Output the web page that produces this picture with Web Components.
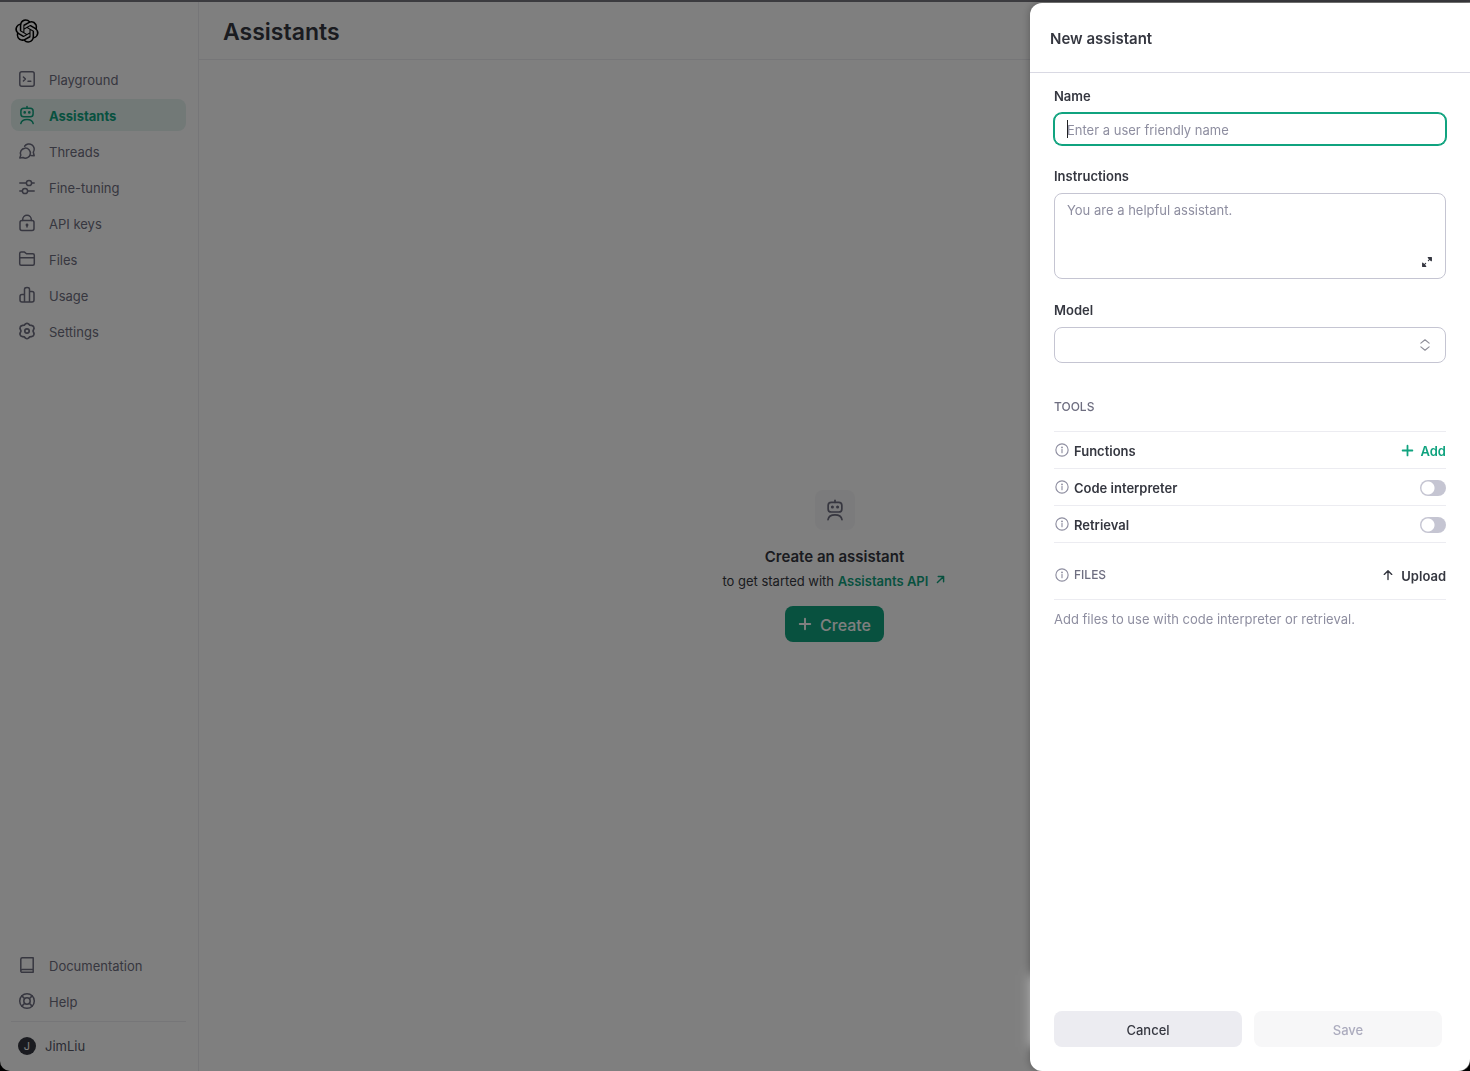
<!DOCTYPE html>
<html lang="en">
<head>
<meta charset="utf-8">
<title>Assistants</title>
<style>
  html, body { height: 100%; }
  body {
    margin: 0;
    background: #000;
    font: 13px/20px Inter, "Liberation Sans", sans-serif;
    color: #353740;
    --green: #10a37f;
    --muted: #6e6e80;
    --placeholder: #8e8ea0;
    --line: #ececf1;
    --border: #c5c5d2;
  }
</style>
</head>
<body>
<app-shell>
  <side-nav slot="nav">
    <nav-item icon="playground">Playground</nav-item>
    <nav-item icon="assistant" active>Assistants</nav-item>
    <nav-item icon="threads">Threads</nav-item>
    <nav-item icon="tuning">Fine-tuning</nav-item>
    <nav-item icon="lock">API keys</nav-item>
    <nav-item icon="folder">Files</nav-item>
    <nav-item icon="usage">Usage</nav-item>
    <nav-item icon="settings">Settings</nav-item>
    <nav-item slot="bottom" icon="book">Documentation</nav-item>
    <nav-item slot="bottom" icon="help">Help</nav-item>
    <user-badge slot="user" initial="J">JimLiu</user-badge>
  </side-nav>
  <page-header slot="header">Assistants</page-header>
  <empty-state></empty-state>
</app-shell>

<side-drawer heading="New assistant">
  <text-field label="Name" placeholder="Enter a user friendly name"></text-field>
  <text-area-field label="Instructions" placeholder="You are a helpful assistant."></text-area-field>
  <select-field label="Model"></select-field>
  <tool-list>
    <tool-row label="Functions" action="Add"></tool-row>
    <tool-row label="Code interpreter"></tool-row>
    <tool-row label="Retrieval"></tool-row>
  </tool-list>
  <file-section>Add files to use with code interpreter or retrieval.</file-section>
</side-drawer>

<script>
const ICONS = {
  logo: `<svg viewBox="0 0 41 41" fill="currentColor"><path d="M37.532 16.87a9.963 9.963 0 0 0-.856-8.184 10.078 10.078 0 0 0-10.855-4.835A9.964 9.964 0 0 0 18.306.5a10.079 10.079 0 0 0-9.614 6.977 9.967 9.967 0 0 0-6.664 4.834 10.08 10.08 0 0 0 1.24 11.817 9.965 9.965 0 0 0 .856 8.185 10.079 10.079 0 0 0 10.855 4.835 9.965 9.965 0 0 0 7.516 3.35 10.078 10.078 0 0 0 9.617-6.981 9.967 9.967 0 0 0 6.663-4.834 10.079 10.079 0 0 0-1.243-11.813ZM22.498 37.886a7.474 7.474 0 0 1-4.799-1.735c.061-.033.168-.091.237-.134l7.964-4.6a1.294 1.294 0 0 0 .655-1.134V19.054l3.366 1.944a.12.12 0 0 1 .066.092v9.299a7.505 7.505 0 0 1-7.49 7.496ZM6.392 31.006a7.471 7.471 0 0 1-.894-5.023c.06.036.162.099.237.141l7.964 4.6a1.297 1.297 0 0 0 1.308 0l9.724-5.614v3.888a.12.12 0 0 1-.048.103l-8.051 4.649a7.504 7.504 0 0 1-10.24-2.744ZM4.297 13.62A7.469 7.469 0 0 1 8.2 10.333c0 .068-.004.19-.004.274v9.201a1.294 1.294 0 0 0 .654 1.132l9.723 5.614-3.366 1.944a.12.12 0 0 1-.114.01L7.04 23.856a7.504 7.504 0 0 1-2.743-10.237Zm27.658 6.437-9.724-5.615 3.367-1.943a.121.121 0 0 1 .113-.01l8.052 4.648a7.498 7.498 0 0 1-1.158 13.528v-9.476a1.293 1.293 0 0 0-.65-1.132Zm3.35-5.043c-.059-.037-.162-.099-.236-.141l-7.965-4.6a1.298 1.298 0 0 0-1.308 0l-9.723 5.614v-3.888a.12.12 0 0 1 .048-.103l8.05-4.645a7.497 7.497 0 0 1 11.135 7.763Zm-21.063 6.929-3.367-1.944a.12.12 0 0 1-.065-.092v-9.299a7.497 7.497 0 0 1 12.293-5.756 6.94 6.94 0 0 0-.236.134l-7.965 4.6a1.294 1.294 0 0 0-.654 1.132l-.006 11.225Zm1.829-3.943 4.33-2.501 4.332 2.5v5l-4.331 2.5-4.331-2.5V18Z"/></svg>`,
  playground: line(`<rect x=".8" y=".8" width="14.4" height="14.4" rx="2"/><path d="M4.4 6 6.400 8l-2 2M9 10.200h2.800"/>`),
  assistant: line(`<path d="M8-.6v1.800"/><rect x="1.900" y="1.200" width="12.200" height="8.600" rx="2.800"/><path d="M1.800 16.600c.5-2.800 2.900-4.200 6.200-4.200s5.700 1.400 6.200 4.200"/><circle cx="5.700" cy="5.400" r=".6" fill="currentColor"/><circle cx="10.300" cy="5.400" r=".6" fill="currentColor"/>`),
  threads: line(`<path d="M.8 14.900l1-2.800A5 5 0 1 1 4 14.500Z"/><path d="M5.600 3.200a5.200 5.200 0 1 1 8.700 6l.9 3.500-3.500-.2"/>`),
  tuning: line(`<path d="M.8 4h6.400M12.800 4h2.400M.8 12h2.400M8.800 12h6.400"/><circle cx="10" cy="4" r="2.600"/><circle cx="6" cy="12" r="2.600"/>`),
  lock: line(`<rect x="1" y="5.600" width="14" height="10" rx="2"/><path d="M3.700 5.400V4.600a4.300 4.300 0 0 1 8.600 0v.8M8 10.400v1.500"/><circle cx="8" cy="9.900" r=".7" fill="currentColor"/>`),
  folder: line(`<path d="M.7 12.700V2.600c0-.9.600-1.500 1.500-1.500h3.300l2 1.700h6.300c.9 0 1.500.6 1.500 1.500v8.400c0 .9-.6 1.500-1.500 1.500H2.200c-.9 0-1.500-.6-1.500-1.500ZM.7 6.800h14.600"/>`),
  usage: line(`<path d="M5.500 15V2.300C5.500 1.200 6.300.6 8 .6s2.500.6 2.500 1.700V15M5.500 7.600H3c-1.300 0-2 .7-2 2V13c0 1.300.7 2 2 2h10c1.300 0 2-.7 2-2V6.600c0-1.300-.7-2-2-2h-2.500"/>`),
  settings: line(`<path d="M6.500.9q1.500-1.100 3 0l1.200 1.200 1.700.2q1.900.2 2.500 1.900.4 1-.2 2L14 8l.7 1.800q.6 1 .2 2-.6 1.700-2.500 1.900l-1.700.2-1.200 1.200q-1.500 1.100-3 0l-1.200-1.200-1.700-.2q-1.900-.2-2.500-1.900-.4-1 .2-2L2 8l-.7-1.800q-.6-1-.2-2 .6-1.700 2.500-1.900l1.700-.2Z"/><circle cx="8" cy="8" r="2.200"/>`, 1.7),
  book: line(`<path d="M1.800 14.200V2.300C1.800 1.400 2.400.8 3.300.8h10.900v14.500H3.200c-.8 0-1.400-.5-1.400-1.300 0-.9.600-1.500 1.500-1.500h10.900"/>`),
  help: line(`<circle cx="8" cy="8" r="7.300"/><circle cx="8" cy="8" r="3.200"/><path d="m2.900 2.900 2.800 2.800M13.100 2.900l-2.800 2.800M2.900 13.100l2.800-2.800M13.100 13.100l-2.800-2.800"/>`),
  plus: line(`<path d="M8 2v12M2 8h12"/>`, 2.2),
  up: line(`<path d="M8 14V2.500M3 7.200l5-5 5 5"/>`, 1.8),
  external: line(`<path d="M2.500 13.500l11-11M4 2.500h9.500V12"/>`, 2.6),
  info: line(`<circle cx="8" cy="8" r="7"/><path d="M8 7.400v3.800"/><circle cx="8" cy="5" r=".4" fill="currentColor"/>`, 1.3),
  expand: line(`<path d="M9.800 6.200 13.500 2.500M6.200 9.800 2.500 13.500"/><path d="M9.600 2.200h4.200v4.200ZM2.200 9.600v4.200h4.200Z" fill="currentColor"/>`, 1.5),
  chevrons: line(`<path d="m2.500 5.500 5.500-4.500 5.500 4.500M2.500 10.500l5.500 4.500 5.500-4.500"/>`, 1.6),
};

function line(shapes, width = 1.5) {
  return `<svg viewBox="0 0 16 16" fill="none" stroke="currentColor" stroke-width="${width}" stroke-linecap="round" stroke-linejoin="round">${shapes}</svg>`;
}

// Every element opens its shadow root the same way and renders once.
class BaseElement extends HTMLElement {
  constructor() {
    super();
    this.attachShadow({ mode: "open" });
  }

  connectedCallback() {
    this.shadowRoot.innerHTML = `
      <style>
        *, ::before, ::after { box-sizing: border-box; }
        button, input, textarea, select { font: inherit; color: inherit; margin: 0; }
        button { border: 0; padding: 0; background: none; cursor: pointer; }
        a { color: inherit; text-decoration: none; }
      </style>
      ${this.render()}`;
  }

  attr(name) {
    return this.getAttribute(name) || "";
  }
}

class SvgIcon extends BaseElement {
  render() {
    return `
      <style>
        :host { display: block; flex: none; width: var(--size, 16px); height: var(--size, 16px); }
        svg { display: block; width: 100%; height: 100%; overflow: visible; }
      </style>
      ${ICONS[this.attr("name")]}`;
  }
}

class AppShell extends BaseElement {
  render() {
    return `
      <style>
        :host {
          display: block;
          box-sizing: border-box;
          height: 100vh;
          padding-top: 2px;
          background: linear-gradient(#77767e 2px, #000 2px);
        }
        .window {
          display: grid;
          grid-template-columns: auto 1fr;
          height: 100%;
          background: #fff;
          border-radius: 0 0 10px 10px;
          overflow: hidden;
        }
        main { display: flex; flex-direction: column; }
        .content { flex: 1; display: grid; place-items: center; }
      </style>
      <div class="window">
        <slot name="nav"></slot>
        <main>
          <slot name="header"></slot>
          <div class="content"><slot></slot></div>
        </main>
      </div>`;
  }
}

class SideNav extends BaseElement {
  render() {
    return `
      <style>
        :host {
          display: flex;
          flex-direction: column;
          box-sizing: border-box;
          width: 199px;
          padding: 17px 12px 9px 11px;
          border-right: 1px solid var(--line);
        }
        .logo { --size: 24px; color: #000; margin: 0 0 20px 4px; align-self: flex-start; }
        nav { display: flex; flex-direction: column; gap: 4px; }
        .bottom { margin-top: auto; }
        .user { margin-top: 4px; border-top: 1px solid var(--line); padding-top: 8px; }
      </style>
      <a class="logo" href="#" aria-label="Home"><svg-icon name="logo"></svg-icon></a>
      <nav><slot></slot></nav>
      <nav class="bottom"><slot name="bottom"></slot></nav>
      <div class="user"><slot name="user"></slot></div>`;
  }
}

class NavItem extends BaseElement {
  render() {
    return `
      <style>
        :host { display: block; color: var(--muted); }
        a {
          display: flex;
          align-items: center;
          gap: 14px;
          height: 32px;
          padding: 0 8px;
          border-radius: 8px;
        }
        slot { display: block; margin-top: 2px; }
        :host([active]) { color: var(--green); font-weight: 700; }
        :host([active]) a { background: #e4f2ef; }
      </style>
      <a href="#"><svg-icon name="${this.attr("icon")}"></svg-icon><slot></slot></a>`;
  }
}

class UserBadge extends BaseElement {
  render() {
    return `
      <style>
        :host { display: block; color: #565869; }
        button { display: flex; align-items: center; gap: 9px; height: 32px; padding: 0 7px; }
        .avatar {
          width: 18px;
          height: 18px;
          border-radius: 50%;
          background: #353740;
          color: #fff;
          font-size: 11px;
          line-height: 18px;
        }
      </style>
      <button type="button"><span class="avatar">${this.attr("initial")}</span><slot></slot></button>`;
  }
}

class PageHeader extends BaseElement {
  render() {
    return `
      <style>
        :host { display: block; border-bottom: 1px solid var(--line); }
        h1 { margin: 0; padding: 16px 24px 13px; font-size: 23px; line-height: 28px; font-weight: 600; }
      </style>
      <h1><slot></slot></h1>`;
  }
}

class EmptyState extends BaseElement {
  render() {
    return `
      <style>
        :host { display: flex; flex-direction: column; align-items: center; }
        .tile {
          display: grid;
          place-items: center;
          width: 40px;
          height: 40px;
          border-radius: 8px;
          background: #f7f7f8;
          color: var(--muted);
          --size: 18px;
          margin-bottom: 15px;
        }
        h2 { margin: 0; font-size: 15px; line-height: 24px; font-weight: 600; }
        p { margin: 2px 0 15px; }
        p a { color: var(--green); font-weight: 600; }
        p svg-icon { display: inline-block; --size: 9px; margin: 0 2px 2px 4px; }
        button {
          display: flex;
          align-items: center;
          gap: 8px;
          height: 36px;
          padding: 0 13px;
          border-radius: 8px;
          background: var(--green);
          color: #fff;
          font-size: 16px;
          font-weight: 500;
          --size: 14px;
        }
        button span { padding-top: 2px; }
      </style>
      <div class="tile"><svg-icon name="assistant"></svg-icon></div>
      <h2>Create an assistant</h2>
      <p>to get started with <a href="#">Assistants API <svg-icon name="external"></svg-icon></a></p>
      <button type="button"><svg-icon name="plus"></svg-icon><span>Create</span></button>`;
  }
}

class SideDrawer extends BaseElement {
  render() {
    return `
      <style>
        :host { position: fixed; inset: 0; display: flex; justify-content: flex-end; background: rgba(0, 0, 0, .5); }
        section {
          display: flex;
          flex-direction: column;
          width: 440px;
          margin-top: 3px;
          background: #fff;
          border-radius: 12px 0 12px 12px;
          box-shadow: 0 0 8px rgba(0, 0, 0, .3);
        }
        h2 {
          margin: 0;
          padding: 24px 20px 21px;
          border-bottom: 1px solid #d9d9e3;
          font-size: 15px;
          line-height: 24px;
          font-weight: 600;
        }
        .body { flex: 1; padding: 13px 24px; }
        footer {
          display: grid;
          grid-template-columns: 1fr 1fr;
          gap: 12px;
          margin-bottom: 24px;
          padding: 36px 28px 0 24px;
          background: #fff;
          box-shadow: 0 0 10px rgba(255, 255, 255, .6);
        }
        button { height: 36px; padding-top: 2px; border-radius: 8px; background: #ececf1; font-weight: 500; }
        button:disabled { background: #f7f7f8; color: #acacbe; cursor: default; }
      </style>
      <section role="dialog" aria-label="${this.attr("heading")}">
        <h2>${this.attr("heading")}</h2>
        <div class="body"><slot></slot></div>
        <footer>
          <button type="button">Cancel</button>
          <button type="button" disabled>Save</button>
        </footer>
      </section>`;
  }
}

const FIELD_STYLE = `
  <style>
    :host { display: block; margin-bottom: 21px; }
    label { display: block; margin-bottom: 7px; font-weight: 600; }
    input, textarea, select {
      display: block;
      width: 100%;
      padding: 6px 12px;
      border: 1px solid var(--border);
      border-radius: 8px;
      background: #fff;
      outline: none;
      resize: none;
      appearance: none;
    }
    ::placeholder { color: var(--placeholder); opacity: 1; }
  </style>`;

class TextField extends BaseElement {
  render() {
    return `
      ${FIELD_STYLE}
      <style>
        input { height: 32px; padding: 7px 12px 5px; caret-color: #202123; }
        input:focus { border-color: var(--green); box-shadow: 0 0 0 1px var(--green); }
        /* steady caret while the field is empty */
        input:focus:placeholder-shown {
          caret-color: transparent;
          background: linear-gradient(#202123, #202123) 12px 6px / 1px 18px no-repeat #fff;
        }
      </style>
      <label for="control">${this.attr("label")}</label>
      <input id="control" type="text" placeholder="${this.attr("placeholder")}">`;
  }

  connectedCallback() {
    super.connectedCallback();
    this.shadowRoot.querySelector("input").focus();
  }
}

class TextAreaField extends BaseElement {
  render() {
    return `
      ${FIELD_STYLE}
      <style>
        .box { display: grid; }
        textarea, button { grid-area: 1 / 1; }
        textarea { height: 86px; }
        button { place-self: end; margin: 11px 13px; --size: 12px; }
      </style>
      <label for="control">${this.attr("label")}</label>
      <div class="box">
        <textarea id="control" placeholder="${this.attr("placeholder")}"></textarea>
        <button type="button" aria-label="Expand"><svg-icon name="expand"></svg-icon></button>
      </div>`;
  }
}

class SelectField extends BaseElement {
  render() {
    return `
      ${FIELD_STYLE}
      <style>
        .box { display: grid; }
        select, svg-icon { grid-area: 1 / 1; }
        select { height: 36px; }
        svg-icon { place-self: center end; margin-right: 15px; --size: 12px; color: #8e8e98; pointer-events: none; }
      </style>
      <label for="control">${this.attr("label")}</label>
      <div class="box">
        <select id="control"><option></option></select>
        <svg-icon name="chevrons"></svg-icon>
      </div>`;
  }
}

class ToolList extends BaseElement {
  render() {
    return `
      <style>
        :host { display: block; padding-top: 13px; }
        h3 { margin: 0; padding-bottom: 14px; border-bottom: 1px solid var(--line); font-size: 12px; line-height: 20px; font-weight: 500; color: var(--muted); }
      </style>
      <h3>TOOLS</h3>
      <slot></slot>`;
  }
}

class ToolRow extends BaseElement {
  render() {
    const action = this.attr("action");
    return `
      <style>
        :host { display: flex; align-items: center; height: 36px; border-bottom: 1px solid var(--line); font-weight: 600; }
        .info { --size: 14px; margin: 0 5px 0 1px; color: var(--placeholder); }
        label, .name { flex: 1; }
        label, span { display: block; padding-top: 2px; }
        button { display: flex; align-items: center; gap: 7px; color: var(--green); font-weight: 600; --size: 13px; }
        input {
          appearance: none;
          width: 26px;
          height: 16px;
          margin-top: 2px;
          border-radius: 8px;
          background: radial-gradient(circle at 8px 8px, #fff 6px, #c5c5d2 7px);
        }
        input:checked { background: radial-gradient(circle at 18px 8px, #fff 6px, var(--green) 7px); }
      </style>
      <svg-icon class="info" name="info"></svg-icon>
      ${action
        ? `<span class="name">${this.attr("label")}</span>
           <button type="button"><svg-icon name="plus"></svg-icon><span>${action}</span></button>`
        : `<label for="toggle">${this.attr("label")}</label>
           <input id="toggle" type="checkbox" role="switch">`}`;
  }
}

class FileSection extends BaseElement {
  render() {
    return `
      <style>
        :host { display: block; }
        header { display: flex; align-items: center; margin-top: 21px; padding-bottom: 13px; border-bottom: 1px solid var(--line); }
        .info { --size: 14px; margin: 0 5px 0 1px; color: var(--placeholder); }
        h3 { flex: 1; margin: 0; font-size: 12px; line-height: 20px; font-weight: 500; color: var(--muted); }
        button { display: flex; align-items: center; gap: 7px; font-weight: 600; --size: 12px; }
        span { padding-top: 2px; }
        p { margin: 9px 0 0; color: var(--placeholder); }
      </style>
      <header>
        <svg-icon class="info" name="info"></svg-icon>
        <h3>FILES</h3>
        <button type="button"><svg-icon name="up"></svg-icon><span>Upload</span></button>
      </header>
      <p><slot></slot></p>`;
  }
}

customElements.define("svg-icon", SvgIcon);
customElements.define("app-shell", AppShell);
customElements.define("side-nav", SideNav);
customElements.define("nav-item", NavItem);
customElements.define("user-badge", UserBadge);
customElements.define("page-header", PageHeader);
customElements.define("empty-state", EmptyState);
customElements.define("side-drawer", SideDrawer);
customElements.define("text-field", TextField);
customElements.define("text-area-field", TextAreaField);
customElements.define("select-field", SelectField);
customElements.define("tool-list", ToolList);
customElements.define("tool-row", ToolRow);
customElements.define("file-section", FileSection);
</script>
</body>
</html>
